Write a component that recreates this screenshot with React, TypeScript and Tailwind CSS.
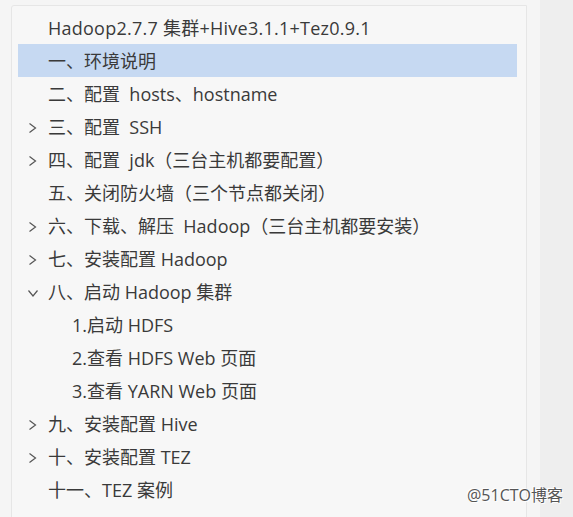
const items: { label: string; chevron?: 'right' | 'down'; level?: number; active?: boolean }[] = [
  { label: '一、环境说明', active: true },
  { label: '二、配置  hosts、hostname' },
  { label: '三、配置  SSH', chevron: 'right' },
  { label: '四、配置  jdk（三台主机都要配置）', chevron: 'right' },
  { label: '五、关闭防火墙（三个节点都关闭）' },
  { label: '六、下载、解压  Hadoop（三台主机都要安装）', chevron: 'right' },
  { label: '七、安装配置 Hadoop', chevron: 'right' },
  { label: '八、启动 Hadoop 集群', chevron: 'down' },
  { label: '1.启动 HDFS', level: 1 },
  { label: '2.查看 HDFS Web 页面', level: 1 },
  { label: '3.查看 YARN Web 页面', level: 1 },
  { label: '九、安装配置 Hive', chevron: 'right' },
  { label: '十、安装配置 TEZ', chevron: 'right' },
  { label: '十一、TEZ 案例' },
]

function Chevron({ dir }: { dir: 'right' | 'down' }) {
  return (
    <svg width="12" height="14" viewBox="0 0 12 14" className="text-[#555]">
      {dir === 'right' ? (
        <path d="M2.5 2.5 L8.5 7 L2.5 11.5" fill="none" stroke="currentColor" strokeWidth="1.2" />
      ) : (
        <path d="M1.5 4.5 L6 10 L10.5 4.5" fill="none" stroke="currentColor" strokeWidth="1.2" />
      )}
    </svg>
  )
}

export default function App() {
  return (
    <div
      className="relative flex h-[517px] w-[573px] overflow-hidden bg-[#f5f5f5] text-[#3a3a3a]"
      style={{ fontFamily: '"Open Sans", "Noto Sans CJK SC", sans-serif' }}
    >
      <div className="ml-[11px] mt-[5px] h-[560px] w-[516px] shrink-0 rounded-tl-[3px] border border-[#e6e6e6] bg-[#f7f7f7] pt-[5px]">
        <div className="flex h-[33px] items-center whitespace-pre pl-[36px] pt-[2px] text-[18px] tracking-[0.25px]">
          Hadoop2.7.7 集群+Hive3.1.1+Tez0.9.1
        </div>
        {items.map((it) => (
          <div
            key={it.label}
            className={`ml-[6px] mr-[9px] flex h-[33px] items-center whitespace-pre pt-[2px] text-[18px] ${
              it.active ? 'bg-[#c6d9f2]' : ''
            }`}
          >
            <div className="flex w-[30px] shrink-0 items-center pl-[9px]">
              {it.chevron && <Chevron dir={it.chevron} />}
            </div>
            <span className={it.level ? 'pl-[24px]' : ''}>{it.label}</span>
          </div>
        ))}
      </div>
      <div className="ml-[13px] flex-1 bg-[#eeeeee]" />
      <div
        className="absolute bottom-[10px] right-[10px] text-[16px] text-[#555]"
        style={{ textShadow: '1px 1px 0 #fff, -1px -1px 0 #fff' }}
      >
        @51CTO博客
      </div>
    </div>
  )
}
